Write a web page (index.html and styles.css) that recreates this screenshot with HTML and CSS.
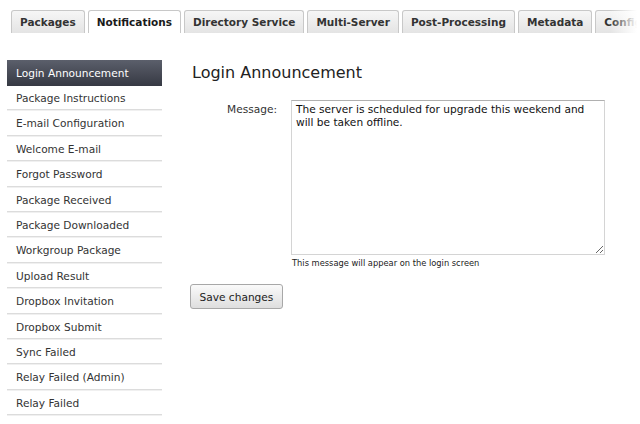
FILE: index.html
```html
<!DOCTYPE html>
<html>
<head>
<meta charset="utf-8">
<link rel="stylesheet" href="styles.css">
</head>
<body>
<div class="tabbar">
  <div class="tabs">
    <div class="tab">Packages</div>
    <div class="tab active">Notifications</div>
    <div class="tab">Directory Service</div>
    <div class="tab">Multi-Server</div>
    <div class="tab">Post-Processing</div>
    <div class="tab">Metadata</div>
    <div class="tab">Configuration</div>
  </div>
  <div class="fade"></div>
</div>
<div class="page">
  <ul class="side">
    <li class="item active">Login Announcement</li>
    <li class="item">Package Instructions</li>
    <li class="item">E-mail Configuration</li>
    <li class="item">Welcome E-mail</li>
    <li class="item">Forgot Password</li>
    <li class="item">Package Received</li>
    <li class="item">Package Downloaded</li>
    <li class="item">Workgroup Package</li>
    <li class="item">Upload Result</li>
    <li class="item">Dropbox Invitation</li>
    <li class="item">Dropbox Submit</li>
    <li class="item">Sync Failed</li>
    <li class="item">Relay Failed (Admin)</li>
    <li class="item">Relay Failed</li>
  </ul>
  <div class="main">
    <h1 class="title">Login Announcement</h1>
    <div class="row">
      <label class="label">Message:</label>
      <div class="field">
        <textarea class="msg">The server is scheduled for upgrade this weekend and will be taken offline.</textarea>
        <div class="hint">This message will appear on the login screen</div>
      </div>
    </div>
    <button class="save">Save changes</button>
  </div>
</div>
</body>
</html>
```
FILE: styles.css
```css
html, body {
  margin: 0;
  padding: 0;
  background: #fff;
  font-family: "DejaVu Sans", Verdana, sans-serif;
  color: #333;
}
.tabbar {
  position: relative;
  height: 33px;
  overflow: hidden;
}
.tabs {
  display: flex;
  gap: 3px;
  padding: 10px 0 0 11px;
  white-space: nowrap;
}
.tab {
  flex: none;
  height: 22px;
  line-height: 22px;
  padding: 0 8px;
  font-size: 10.5px;
  font-weight: bold;
  color: #333;
  border: 1px solid #c8c8c8;
  border-bottom-color: #b8b8b8;
  border-radius: 3px 3px 0 0;
  background: linear-gradient(#f6f6f6, #e4e4e4);
}
.tab.active {
  background: #fff;
  color: #1a1a1a;
  border-bottom-color: #fff;
}
.fade {
  position: absolute;
  right: 0;
  top: 0;
  width: 30px;
  height: 33px;
  background: linear-gradient(to right, rgba(255,255,255,0), #fff 90%);
}
.page {
  display: flex;
  padding: 27px 0 0 7px;
}
.side {
  list-style: none;
  margin: 0;
  padding: 0;
  width: 155px;
  flex: none;
}
.item {
  height: 23.4px;
  line-height: 25px;
  padding-left: 9px;
  font-size: 10.6px;
  color: #333;
  border-bottom: 1px solid #dcdcdc;
  box-shadow: 0 1px 0 #f0f0f0;
  margin-bottom: 1px;
}
.item.active {
  height: 26px;
  line-height: 26px;
  color: #fff;
  background: linear-gradient(#5b5f6b, #363943);
  border-bottom: 0;
  box-shadow: none;
  margin-bottom: 0;
}
.main {
  padding-left: 30px;
  flex: 1;
}
.title {
  margin: 3px 0 0 0;
  font-size: 16px;
  font-weight: normal;
  color: #222;
  line-height: 20px;
}
.row {
  display: flex;
  margin-top: 17px;
}
.label {
  width: 85px;
  text-align: right;
  font-size: 10.6px;
  color: #333;
  padding-top: 3px;
  line-height: 13px;
}
.field {
  margin-left: 14px;
}
.msg {
  display: block;
  width: 314px;
  height: 155px;
  box-sizing: border-box;
  margin: 0;
  padding: 2px 4px;
  font-family: "DejaVu Sans", Verdana, sans-serif;
  font-size: 10.6px;
  line-height: 13px;
  color: #111;
  border: 1px solid #d4d4d4;
  border-top-color: #b0b0b0;
  resize: both;
}
.hint {
  font-size: 8.3px;
  color: #222;
  margin-top: 3px;
  padding-left: 1px;
}
.save {
  display: block;
  margin-top: 16px;
  margin-left: -2px;
  height: 25px;
  padding: 0 8.5px;
  font-family: "DejaVu Sans", Verdana, sans-serif;
  font-size: 10.6px;
  color: #222;
  border: 1px solid #a8a8a8;
  border-radius: 3px;
  background: linear-gradient(#fafafa, #dedede);
}
```
